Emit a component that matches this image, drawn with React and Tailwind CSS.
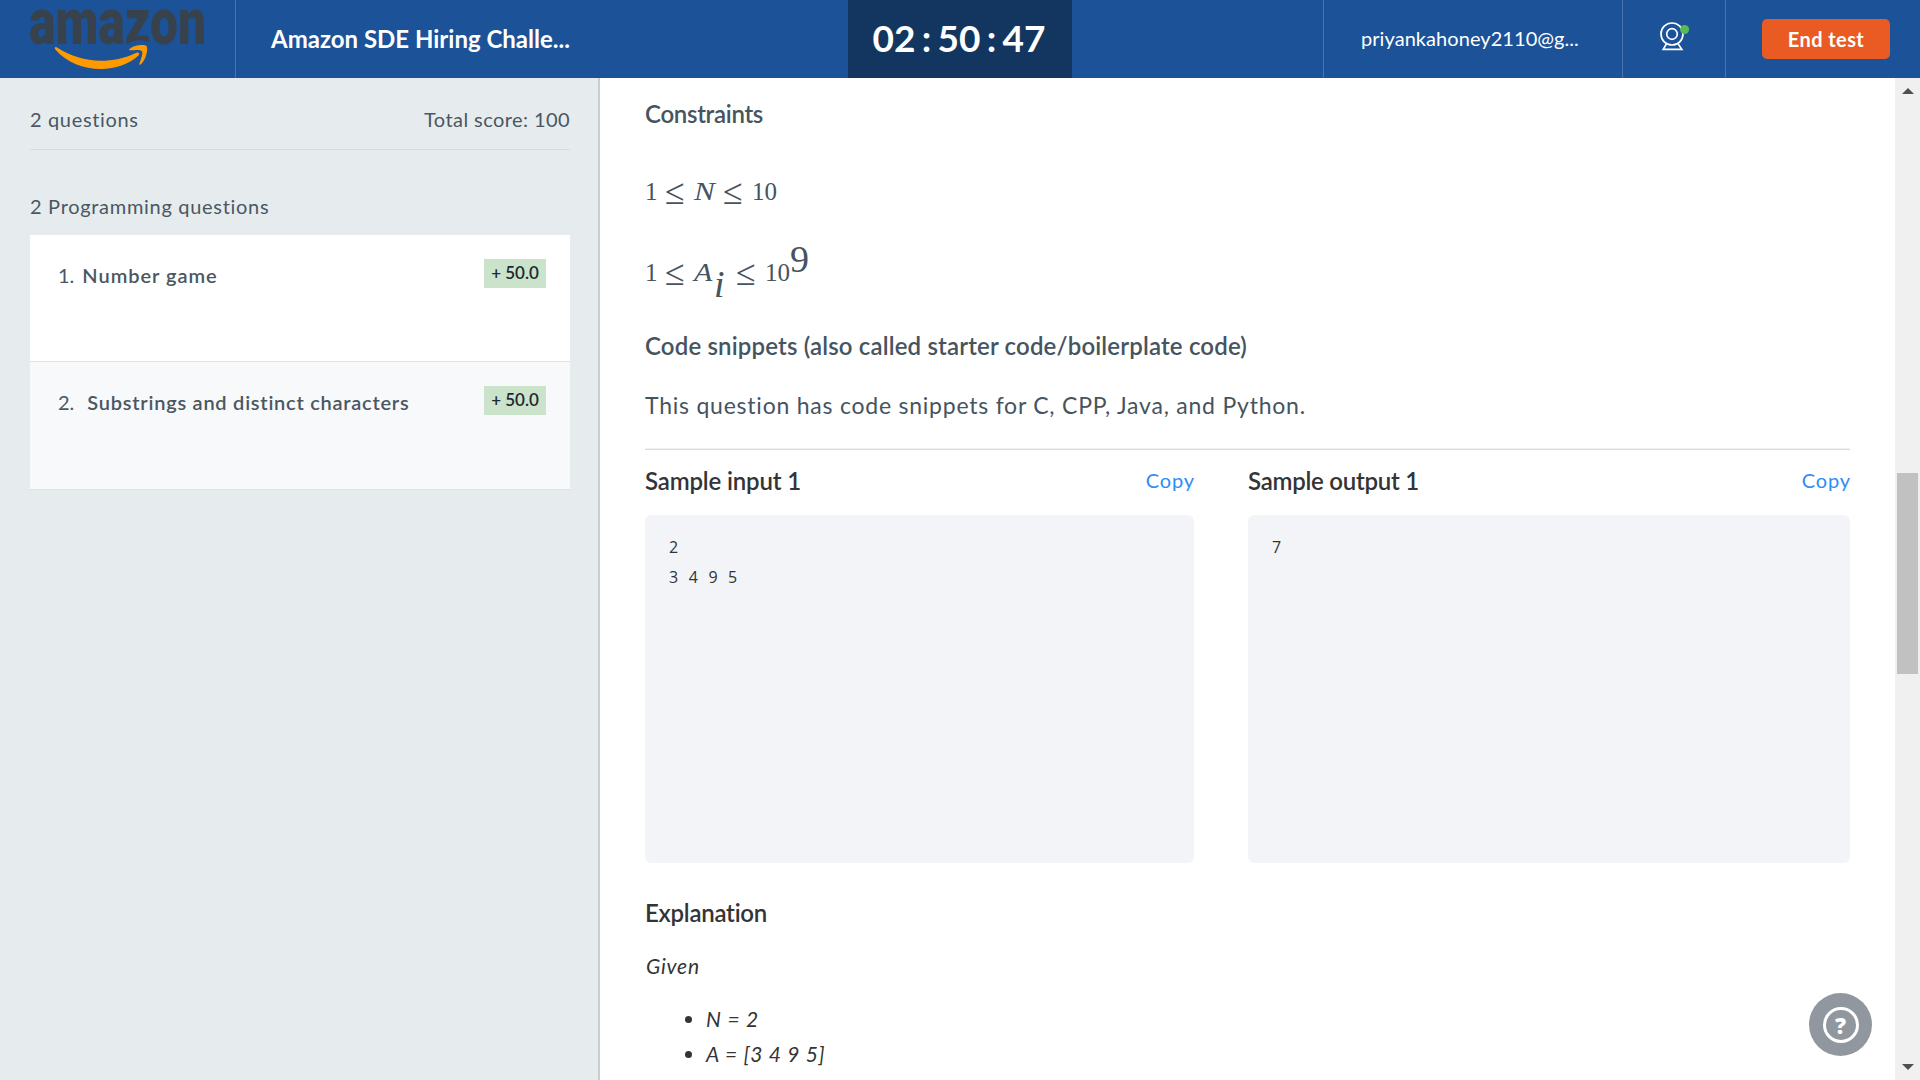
function AmazonLogo() {
  return (
    <svg className="absolute left-0 top-0" width="235" height="78" viewBox="0 0 235 78" role="img" aria-label="amazon">
      <text
        x="29"
        y="43.500"
        textLength="177"
        lengthAdjust="spacingAndGlyphs"
        fill="#37424c"
        fontFamily='Roboto, "Liberation Sans", sans-serif'
        fontWeight="900"
        fontSize="64.500"
      >
        amazon
      </text>
      <path
        d="M55.6 47 C54.4 47.2 54.6 48.8 55.8 50 C67 62.500 83 69 101 69 C115 69 129.500 64 138.500 55.500 C140.300 53.600 138.600 51.700 136.300 52.800 C124.500 58.500 112.500 60.800 101 60.800 C85 60.800 70.500 56 57.500 47.800 C56.700 47.200 56.200 46.900 55.600 47 Z"
        fill="#ff9900"
      />
      <path
        d="M129 43 C134 39 146 39.500 151 43.500 L149 47 L127 47 Z"
        fill="#1c5297"
      />
      <path
        d="M129.500 49 C133.500 45 144.500 43.800 146.500 46 C148.500 49 146 59.500 141 64.300 C140 65.200 138.900 64.700 139.400 63.400 C141 59.500 143.300 53 142 51.200 C140.500 49.300 134.500 49.900 130.800 50.300 C129.300 50.500 128.600 49.900 129.500 49 Z"
        fill="#ff9900"
      />
    </svg>
  );
}

function WebcamIcon() {
  return (
    <svg width="30" height="34" viewBox="0 0 30 34" fill="none" stroke="#fff" strokeWidth="1.7">
      <circle cx="12" cy="14" r="11" />
      <circle cx="12" cy="14" r="5.300" />
      <path d="M6.600 23.600 L3.200 29.300 H21.800 L18 23.600" />
      <circle cx="24.600" cy="9.500" r="4.500" fill="#56ba56" stroke="none" />
    </svg>
  );
}

function Header() {
  return (
    <header className="flex h-[78px] shrink-0 bg-[#1c5297] text-white">
      <div className="relative w-[236px] shrink-0 border-r border-[#4974ac]">
        <AmazonLogo />
      </div>
      <div className="w-[612px] pl-[35px] text-[24px] font-bold leading-[78px]">Amazon SDE Hiring Challe...</div>
      <div className="flex w-[224px] justify-center bg-[#133661] pr-[2px] text-[37px] font-bold leading-[76px]">
        <span>02</span>
        <span className="w-[22px] text-center">:</span>
        <span>50</span>
        <span className="w-[22px] text-center">:</span>
        <span>47</span>
      </div>
      <div className="w-[252px] border-r border-[#4974ac]" />
      <div className="w-[299px] border-r border-[#4974ac] pl-[37px] text-[20px] leading-[77px] tracking-[0.06px]">
        priyankahoney2110@g...
      </div>
      <div className="w-[103px] border-r border-[#4974ac] pl-[37px] pt-5">
        <WebcamIcon />
      </div>
      <div className="pl-[36px] pt-[19px]">
        <button className="h-10 w-[128px] rounded-[5px] bg-[#ea5b24] text-[20px] font-bold leading-10 tracking-[0.42px]">
          End test
        </button>
      </div>
    </header>
  );
}

function Badge() {
  return (
    <span className="h-[29px] w-[62px] bg-[#cbe3cb] text-center text-[17px] font-semibold leading-[27px] text-[#212830]">
      + 50.0
    </span>
  );
}

function Sidebar() {
  return (
    <aside className="w-[600px] shrink-0 border-r-2 border-[#c9ced1] bg-[#e6ecee] pl-[30px] pr-[28px] text-[20px] leading-[30px] text-[#4a5762]">
      <div className="flex h-[72px] justify-between border-b border-[#d6dbde] pt-[26px]">
        <span className="tracking-[0.65px]">2 questions</span>
        <span className="tracking-[0.42px]">Total score: 100</span>
      </div>
      <h2 className="mt-[41px] tracking-[0.7px]">2 Programming questions</h2>
      <ol className="mt-[14px]">
        <li className="flex h-[127px] justify-between border-b border-[#dfe1e3] bg-white pl-7 pr-6 pt-6">
          <div className="pt-px">
            1.<span className="ml-[8px] font-semibold tracking-[0.98px]">Number game</span>
          </div>
          <Badge />
        </li>
        <li className="flex h-[128px] justify-between border-b border-[#dfe1e3] bg-[#f8f9fb] pl-7 pr-6 pt-6">
          <div className="pt-px">
            2.<span className="ml-[13px] font-semibold tracking-[0.75px]">Substrings and distinct characters</span>
          </div>
          <Badge />
        </li>
      </ol>
    </aside>
  );
}

function Leq() {
  return <span className="relative -left-[2px] top-[4px] w-[27px] text-[36px]">≤</span>;
}

function Constraints() {
  return (
    <div className='font-["Liberation_Serif",serif] text-[25px]'>
      <div className="mt-[41px] flex h-10 items-baseline leading-[36px]">
        <span className="w-[22px]">1</span>
        <Leq />
        <span className="w-[31px] origin-left scale-x-125 italic">N</span>
        <Leq />
        <span>10</span>
      </div>
      <div className="mt-[40px] flex h-10 items-baseline leading-[36px]">
        <span className="w-[22px]">1</span>
        <Leq />
        <span className="w-[18px] origin-left scale-x-120 italic">A</span>
        <span className="relative left-[2px] top-[16px] w-[26px] text-[38px] italic">i</span>
        <Leq />
        <span>10</span>
        <span className="relative -top-[9px] text-[38px]">9</span>
      </div>
    </div>
  );
}

function Sample({ title, children, className, titleClass }) {
  return (
    <section className={className}>
      <div className="flex h-[30px] justify-between">
        <h3 className={`text-[24px] font-semibold text-[#333435] ${titleClass}`}>{title}</h3>
        <button className="-mr-px -mt-[3px] text-[20px] leading-[30px] tracking-[0.9px] text-[#2f8bf7]">Copy</button>
      </div>
      <pre className='mt-[19px] h-[348px] rounded-md bg-[#f2f4f8] py-[17px] pl-6 font-["Open_Sans","Noto_Sans",sans-serif] text-[16px] leading-[30px] tracking-[0.7px] text-[#333] [word-spacing:5px]'>
        {children}
      </pre>
    </section>
  );
}

function Question() {
  return (
    <main className="w-[1295px] overflow-hidden bg-white pl-[45px] pr-[45px] pt-[21px] leading-[30px] text-[#465460]">
      <h3 className="text-[24px] font-semibold tracking-[-0.3px]">Constraints</h3>
      <Constraints />
      <h3 className="mt-[41px] text-[24px] font-semibold tracking-[0.16px]">
        Code snippets (also called starter code/boilerplate code)
      </h3>
      <p className="mt-[29px] text-[23px] tracking-[0.77px]">
        This question has code snippets for C, CPP, Java, and Python.
      </p>
      <div className="mt-[28px] h-[2px] border-b border-t border-b-[#dcdcdc] border-t-[#f0f0f0]" />
      <div className="mt-4 flex justify-between">
        <Sample title="Sample input 1" className="w-[549px]" titleClass="tracking-[-0.15px]">
          {"2\n3 4 9 5"}
        </Sample>
        <Sample title="Sample output 1" className="w-[602px]" titleClass="tracking-[-0.24px]">
          7
        </Sample>
      </div>
      <div className="text-[21px] text-[#333435]">
        <h3 className="mt-[35px] text-[24px] font-semibold leading-[30px] tracking-[-0.25px]">Explanation</h3>
        <p className="mt-[23px] pl-px italic tracking-[0.75px]">Given</p>
        <ul className="mt-5 list-disc pl-[61px] leading-[35px]">
          <li>
            <span className="italic tracking-[0.8px]">N = 2</span>
          </li>
          <li>
            <span className="italic tracking-[0.7px]">A = [3 4 9 5]</span>
          </li>
        </ul>
      </div>
    </main>
  );
}

function Scrollbar() {
  return (
    <div className="flex w-[25px] shrink-0 flex-col items-center bg-[#f0f0f0]">
      <svg className="mt-[10px] shrink-0" width="12" height="6" viewBox="0 0 12 6" fill="#505050">
        <path d="M0 6 L6 0 L12 6 Z" />
      </svg>
      <div className="mt-[379px] h-[201px] w-[21px] shrink-0 bg-[#c1c1c1]" />
      <svg className="mb-[10px] mt-auto shrink-0" width="12" height="6" viewBox="0 0 12 6" fill="#505050">
        <path d="M0 0 H12 L6 6 Z" />
      </svg>
    </div>
  );
}

function HelpButton() {
  return (
    <button className='absolute bottom-6 right-12 flex size-[63px] items-center justify-center rounded-full bg-[#90979f] font-["Open_Sans",sans-serif] text-white'>
      <span className="flex size-9 items-center justify-center rounded-full border-[3px] border-white text-[22px] font-extrabold leading-none">
        ?
      </span>
    </button>
  );
}

export default function App() {
  return (
    <div className='relative flex h-[1080px] w-[1920px] flex-col overflow-hidden bg-white font-["Lato",sans-serif]'>
      <Header />
      <div className="flex min-h-0 flex-1">
        <Sidebar />
        <Question />
        <Scrollbar />
      </div>
      <HelpButton />
    </div>
  );
}
